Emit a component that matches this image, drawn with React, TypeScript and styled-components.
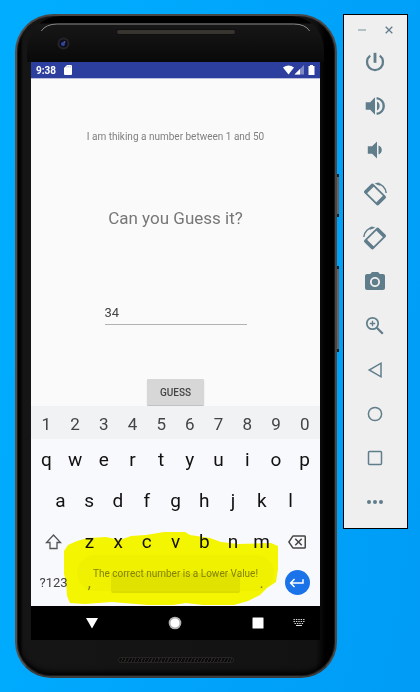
import React, { useState } from "react";
import styled, { createGlobalStyle } from "styled-components";
import { MdPhotoCamera, MdOutlineBackspace, MdKeyboardReturn } from "react-icons/md";

const slate = "#607d8b";

const GlobalStyle = createGlobalStyle`
  * { box-sizing: border-box; }
  body { margin: 0; font-family: Roboto, "Noto Sans", sans-serif; }
  button, input { font-family: inherit; }
`;

const Desktop = styled.main`
  min-height: 100vh;
  display: flex;
  align-items: flex-start;
  gap: 6px;
  padding: 14px 12px 14px 15px;
  background: linear-gradient(100deg, #00aeff 0%, #00a6fb 45%, #009cf6 100%);
`;

const Phone = styled.section`
  position: relative;
  flex: 1;
  min-width: 0;
  display: flex;
  flex-direction: column;
  padding: 0 15px 0 14px;
  border: 2px solid #484746;
  border-left-color: #51504e;
  border-bottom-color: #3c3c3c;
  border-radius: 38px 38px 36px 36px;
  background: linear-gradient(90deg, #030303 0, #030303 3px, #151515 6px, #121212 94%, #000 97%, #000 100%);
  box-shadow: inset 0 0 0 1px #191919, inset 0 -4px 5px #000;
`;

const SideKey = styled.span<{ $top: number; $height: number }>`
  position: absolute;
  right: -4px;
  top: ${(p) => p.$top}px;
  width: 2px;
  height: ${(p) => p.$height}px;
  border: solid #1c1c1c;
  border-width: 3px 0;
  background: #6b6260;
`;

const TopBezel = styled.div`
  position: relative;
  height: 46px;
  margin: 0 -4px;
  padding: 11px 0 0;
  display: flex;
  justify-content: center;
  background: linear-gradient(#000 0, #000 7px, #171717 8px, #090909 100%);
  border-radius: 34px 34px 0 0;
`;

const Glare = styled.svg`
  position: absolute;
  left: 3px;
  right: 3px;
  top: 7px;
  width: calc(100% - 6px);
  height: 9px;
`;

const Camera = styled.svg`
  position: absolute;
  left: 30px;
  top: 21px;
`;

const Speaker = styled.div<{ $wide?: boolean }>`
  width: ${(p) => (p.$wide ? 116 : 120)}px;
  height: 6px;
  margin-top: ${(p) => (p.$wide ? 0 : 2)}px;
  border: 1px solid ${(p) => (p.$wide ? "#252422" : "#101010")};
  border-radius: 3px;
  background: ${(p) =>
    p.$wide
      ? "repeating-linear-gradient(115deg, #292723 0, #292723 1px, #0c0c0c 1px, #0c0c0c 3px)"
      : "#38342f"};
`;

const BottomBezel = styled.div`
  height: 36px;
  padding-top: 17px;
  display: flex;
  justify-content: center;
`;

const Screen = styled.div`
  display: flex;
  flex-direction: column;
  background: #fafafa;
`;

const StatusBar = styled.header`
  height: 17px;
  padding: 0 5px;
  display: flex;
  align-items: center;
  gap: 8px;
  color: #fff;
  font-size: 10px;
  font-weight: 700;
  background: #2c3e9e;
  border-bottom: 1px solid #b9bedc;
`;

const StatusIcons = styled.div`
  margin-left: auto;
  display: flex;
  align-items: center;
  gap: 1px;
`;

const Content = styled.form`
  height: 327px;
  display: flex;
  flex-direction: column;
  align-items: center;
  padding-top: 51px;
`;

const Hint = styled.p`
  margin: 0;
  font-size: 10px;
  line-height: 14px;
  color: #808080;
`;

const Question = styled.h1`
  margin: 64px 0 0;
  font-size: 17px;
  font-weight: 400;
  line-height: 20px;
  color: #777;
`;

const GuessInput = styled.input`
  width: 142px;
  height: 22px;
  margin-top: 75px;
  padding: 0 0 2px;
  border: 0;
  border-bottom: 1px solid #b2b2b2;
  border-radius: 0;
  outline: 0;
  background: transparent;
  font-size: 13px;
  line-height: 18px;
  color: #444;
`;

const GuessButton = styled.button`
  width: 57px;
  height: 26px;
  margin-top: 54px;
  padding: 0;
  border: 0;
  border-radius: 1px;
  background: #d6d7d6;
  box-shadow: 0 1px 1px #bbb;
  font-size: 10px;
  font-weight: 500;
  color: #444;
`;

const Keyboard = styled.div`
  position: relative;
  height: 200px;
  background: #f8f9fc;
`;

const KeyRow = styled.div<{ $digits?: boolean; $inset?: boolean }>`
  height: ${(p) => (p.$digits ? 33 : 41)}px;
  padding: ${(p) => (p.$digits ? "3px" : "0")} ${(p) => (p.$inset ? "15px" : "1px")} 0;
  display: flex;
  background: ${(p) => (p.$digits ? "#f1f2f4" : "transparent")};
`;

const Key = styled.button<{ $grow?: number; $size?: number }>`
  flex: ${(p) => p.$grow ?? 2} 1 0;
  min-width: 0;
  padding: 0;
  border: 0;
  display: flex;
  align-items: center;
  justify-content: center;
  background: transparent;
  color: ${(p) => (p.$size && p.$size < 19 ? "#444" : "#111")};
  font-size: ${(p) => p.$size ?? 19}px;
  line-height: 24px;
`;

const SpaceBar = styled.span`
  width: 90%;
  height: 20px;
  border-radius: 2px;
  background: #dfe0e4;
`;

const EnterDisc = styled.span`
  width: 25px;
  height: 25px;
  border-radius: 50%;
  display: flex;
  align-items: center;
  justify-content: center;
  background: #1a73e8;
  color: #fff;
`;

const Toast = styled.div`
  position: absolute;
  left: 46px;
  right: 46px;
  top: 149px;
  height: 36px;
  border-radius: 18px;
  display: flex;
  align-items: center;
  justify-content: center;
  background: rgba(238, 239, 243, 0.4);
  color: #858585;
  font-size: 10px;
  white-space: nowrap;
`;

const Marker = styled.svg`
  position: absolute;
  left: 33px;
  top: 126px;
  width: calc(100% - 73px);
  height: 74px;
  mix-blend-mode: multiply;
  pointer-events: none;
`;

const NavBar = styled.nav`
  height: 34px;
  display: grid;
  grid-template-columns: 19fr 83fr 83fr 83fr 21fr;
  background: #000;
`;

const NavButton = styled.button`
  padding: 0 0 1px;
  border: 0;
  display: flex;
  align-items: center;
  justify-content: center;
  background: transparent;
  min-width: 0;
`;

const NavEnd = styled(NavButton)`
  justify-content: flex-start;
  margin-left: -6px;
`;

const Tools = styled.aside`
  flex: 0 0 65px;
  padding-bottom: 4px;
  border: 1px solid #000;
  background: #efefef;
  display: flex;
  flex-direction: column;
`;

const WindowButtons = styled.div`
  height: 25px;
  padding: 4px 5px 0 4px;
  display: flex;
`;

const ToolButton = styled.button`
  flex: 0 0 44px;
  padding: 0 2px 0 0;
  border: 0;
  display: flex;
  align-items: center;
  justify-content: center;
  background: transparent;
  color: ${slate};
`;

const WindowButton = styled(ToolButton)`
  flex: 1;
  padding: 0;
`;

const Icon = ({ children }: { children: React.ReactNode }) => (
  <svg width="24" height="24" viewBox="0 0 24 24" fill="none" stroke="currentColor" aria-hidden="true">
    {children}
  </svg>
);

const RotateShape = () => (
  <>
    <g transform="rotate(45 12 12.5)">
      <rect x="2.8" y="7" width="18.400" height="11" rx="1" strokeWidth="1.800" />
      <path d="M4 7v11M20 7v11" strokeWidth="3.200" />
    </g>
    <path d="M13.500 1.600C18.500 1.600 22.600 5.500 23.200 11" strokeWidth="1.500" />
    <path d="M11.500 1.500l4.500-1 1.500 3.500z" fill="currentColor" stroke="none" />
  </>
);

const tools: { label: string; icon: React.ReactNode }[] = [
  {
    label: "Power",
    icon: <Icon><path d="M12 2.800v10" strokeWidth="2.800" /><path d="M7.200 5.700a8 8 0 1 0 9.600 0" strokeWidth="2.300" /></Icon>,
  },
  {
    label: "Volume up",
    icon: (
      <Icon>
        <path d="M2.700 8.300h4.500L12 3.200v17.600l-4.800-5.100H2.700zM14 7.500c3.500 1.400 3.500 7.600 0 9z" fill="currentColor" stroke="none" />
        <path d="M13.600 4.100c9.500 1.700 9.500 14.100 0 15.800" strokeWidth="2.400" />
      </Icon>
    ),
  },
  {
    label: "Volume down",
    icon: <Icon><path d="M4.800 8.300h4.300L14 3.500v17l-4.900-4.800H4.800zM15.500 7.500c4.400 1 4.400 8 0 9z" fill="currentColor" stroke="none" /></Icon>,
  },
  { label: "Rotate right", icon: <Icon><RotateShape /></Icon> },
  { label: "Rotate left", icon: <Icon><g transform="translate(24 0) scale(-1 1)"><RotateShape /></g></Icon> },
  { label: "Take screenshot", icon: <MdPhotoCamera size={24} /> },
  {
    label: "Zoom",
    icon: <Icon><circle cx="9.500" cy="9.500" r="5.700" strokeWidth="1.700" /><path d="M13.800 13.800l6 6" strokeWidth="2.200" /><path d="M9.500 6.800v5.400M6.800 9.500h5.400" strokeWidth="1.300" /></Icon>,
  },
  { label: "Back", icon: <Icon><path d="M18 5.200v13.600L6.200 12z" strokeWidth="1.500" /></Icon> },
  { label: "Home", icon: <Icon><circle cx="12" cy="12" r="6.600" strokeWidth="1.500" /></Icon> },
  { label: "Overview", icon: <Icon><rect x="5.500" y="5.500" width="13" height="13" rx="1" strokeWidth="1.500" /></Icon> },
  {
    label: "More",
    icon: <Icon><g fill="currentColor" stroke="none"><circle cx="6" cy="12" r="2" /><circle cx="12" cy="12" r="2" /><circle cx="18" cy="12" r="2" /></g></Icon>,
  },
];

const letters = (row: string) => row.split("").map((c) => <Key type="button" key={c}>{c}</Key>);

export default function App() {
  const [guess, setGuess] = useState("34");

  return (
    <>
      <GlobalStyle />
      <Desktop>
        <Phone>
          <SideKey $top={158} $height={43} />
          <SideKey $top={250} $height={86} />
          <TopBezel>
            <Glare viewBox="0 0 310 9" preserveAspectRatio="none" aria-hidden="true">
              <path d="M12 8Q17 1 29 1H281Q293 1 298 8" fill="none" stroke="#8d8d8d" strokeWidth="1" />
            </Glare>
            <Camera width="13" height="13" viewBox="0 0 13 13" aria-hidden="true">
              <circle cx="6.500" cy="6.500" r="6" fill="#242428" />
              <circle cx="6.500" cy="6.500" r="4" fill="#0c0d1c" />
              <circle cx="6" cy="7" r="2" fill="#33449b" />
              <circle cx="7.500" cy="5" r="1" fill="#4a568c" />
            </Camera>
            <Speaker />
          </TopBezel>
          <Screen>
            <StatusBar>
              <span>9:38</span>
              <svg width="8" height="10" viewBox="0 0 8 10" aria-hidden="true">
                <path d="M3 0h4q1 0 1 1v8q0 1-1 1H1q-1 0-1-1V3z" fill="#fff" />
                <path d="M3 1v1.500M4.700 1v1.500M6.400 1v1.500" stroke="#9aa3d2" strokeWidth=".6" />
              </svg>
              <StatusIcons>
                <svg width="32" height="10" viewBox="0 0 32 10" aria-hidden="true">
                  <path d="M0 2.500Q5.500-1.700 11 2.500L5.500 9.500z" fill="#fff" />
                  <path d="M21 0v9.500H11.500z" fill="#fff" opacity=".4" />
                  <path d="M17 4v5.500h-5.500z" fill="#fff" />
                  <path d="M27 0h3v1h1.500v9h-6V1H27z" fill="#fff" />
                </svg>
              </StatusIcons>
            </StatusBar>
            <Content onSubmit={(e) => e.preventDefault()}>
              <Hint>I am thiking a number between 1 and 50</Hint>
              <Question>Can you Guess it?</Question>
              <GuessInput
                aria-label="Your guess"
                inputMode="numeric"
                value={guess}
                onChange={(e) => setGuess(e.target.value)}
              />
              <GuessButton type="submit">GUESS</GuessButton>
            </Content>
            <Keyboard>
              <KeyRow $digits>
                {"1234567890".split("").map((d) => <Key type="button" $size={17} key={d}>{d}</Key>)}
              </KeyRow>
              <KeyRow>{letters("qwertyuiop")}</KeyRow>
              <KeyRow $inset>{letters("asdfghjkl")}</KeyRow>
              <KeyRow>
                <Key type="button" $grow={3} aria-label="Shift">
                  <svg width="17" height="16" viewBox="0 0 17 16" fill="none" stroke="#555" strokeWidth="1.300">
                    <path d="M8.500 1L15.500 8.500H12V14.500H5V8.500H1.500z" />
                  </svg>
                </Key>
                {letters("zxcvbnm")}
                <Key type="button" $grow={3} $size={18} aria-label="Backspace"><MdOutlineBackspace /></Key>
              </KeyRow>
              <KeyRow>
                <Key type="button" $grow={3} $size={13}>?123</Key>
                <Key type="button" $size={16}>,</Key>
                <Key type="button" $grow={10} aria-label="Space"><SpaceBar /></Key>
                <Key type="button" $size={16}>.</Key>
                <Key type="button" $grow={3} $size={18} aria-label="Enter"><EnterDisc><MdKeyboardReturn /></EnterDisc></Key>
              </KeyRow>
              <Toast role="status">The correct number is a Lower Value!</Toast>
              <Marker viewBox="0 0 216 74" preserveAspectRatio="none" aria-hidden="true">
                <path
                  d="M0 19L4 13L13 9L24 6L42 5L56 8L67 4L82 3L100 0H121L126 3L146 6L157 10L174 12L207 11L214 14V37L212 50L203 56L196 63L184 69L170 73H139L122 71L109 73H84L48 70L21 72L6 71L3 64L2 49L0 42z"
                  fill="#fbfb00"
                />
              </Marker>
            </Keyboard>
            <NavBar>
              <span />
              <NavButton aria-label="Back">
                <svg width="12" height="12" viewBox="0 0 12 12"><path d="M0 1h12L6 11.500z" fill="#fff" /></svg>
              </NavButton>
              <NavButton aria-label="Home">
                <svg width="14" height="14" viewBox="0 0 14 14"><circle cx="7" cy="7" r="6.300" fill="#bbb" /><circle cx="7" cy="7" r="5" fill="#fff" stroke="#777" strokeWidth=".5" /></svg>
              </NavButton>
              <NavButton aria-label="Overview">
                <svg width="12" height="12" viewBox="0 0 12 12"><rect x=".500" y=".500" width="11" height="11" rx=".500" fill="#fff" /></svg>
              </NavButton>
              <NavEnd aria-label="Switch keyboard">
                <svg width="12" height="8" viewBox="0 0 12 8"><path d="M.500.500h11M.500 2.500h11M1.500 4.500h9" stroke="#ddd" strokeWidth="1" strokeDasharray="1.400 1" /><path d="M3 6.500h6" stroke="#ddd" strokeWidth="1" /></svg>
              </NavEnd>
            </NavBar>
          </Screen>
          <BottomBezel><Speaker $wide /></BottomBezel>
        </Phone>
        <Tools>
          <WindowButtons>
            <WindowButton aria-label="Minimize">
              <svg width="8" height="8" viewBox="0 0 8 8"><path d="M0 4h8" stroke="#9fb0b8" strokeWidth="1.500" /></svg>
            </WindowButton>
            <WindowButton aria-label="Close">
              <svg width="8" height="8" viewBox="0 0 8 8"><path d="M.700.700l6.600 6.600M7.300.700L.700 7.300" stroke={slate} strokeWidth="1.300" /></svg>
            </WindowButton>
          </WindowButtons>
          {tools.map((t) => <ToolButton key={t.label} aria-label={t.label}>{t.icon}</ToolButton>)}
        </Tools>
      </Desktop>
    </>
  );
}
